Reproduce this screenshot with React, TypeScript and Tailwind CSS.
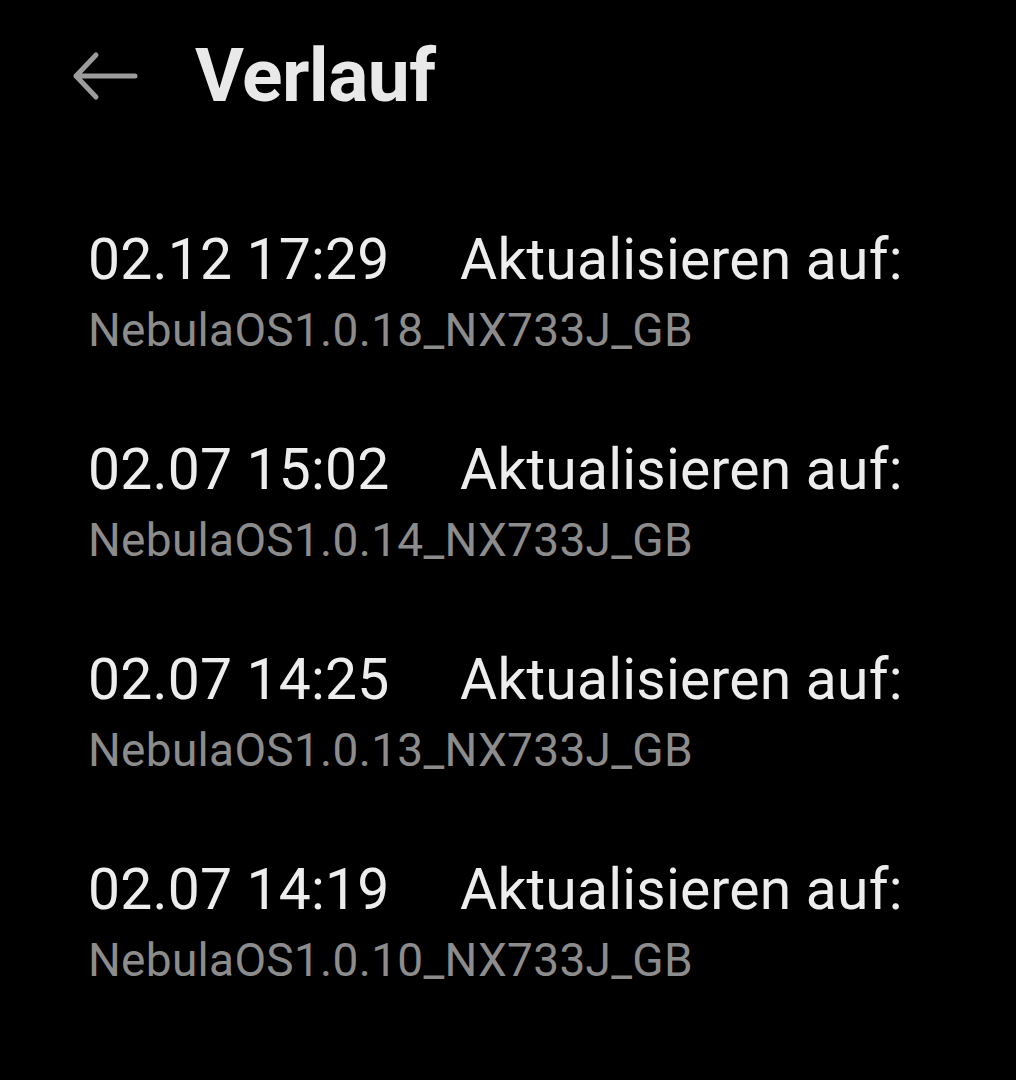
import React from "react";

const entries = [
  { time: "02.12 17:29", version: "NebulaOS1.0.18_NX733J_GB" },
  { time: "02.07 15:02", version: "NebulaOS1.0.14_NX733J_GB" },
  { time: "02.07 14:25", version: "NebulaOS1.0.13_NX733J_GB" },
  { time: "02.07 14:19", version: "NebulaOS1.0.10_NX733J_GB" },
];

function BackArrow() {
  return (
    <svg width="68" height="52" viewBox="0 0 68 52" fill="none" className="shrink-0">
      <path
        d="M65 26H6M26 5L6 26L26 47"
        stroke="#9c9c9c"
        strokeWidth="5"
        strokeLinecap="round"
        strokeLinejoin="round"
      />
    </svg>
  );
}

export default function App() {
  return (
    <div className="w-full min-h-[1080px] bg-black font-['Roboto','Liberation_Sans',sans-serif]">
      <div className="flex items-center gap-[57px] pl-[70px] pt-[38px]">
        <BackArrow />
        <h1 className="text-[75px] leading-none font-bold text-[#e9e9e9] tracking-[-0.5px]">Verlauf</h1>
      </div>

      <div className="flex flex-col gap-[89px] pl-[88px] mt-[119px]">
        {entries.map((e) => (
          <div key={e.version} className="flex flex-col">
            <div className="flex text-[57px] leading-[56px] tracking-[0.2px] text-[#ededed]">
              <span className="w-[372px] shrink-0">{e.time}</span>
              <span>Aktualisieren auf:</span>
            </div>
            <p className="mt-[19px] text-[46px] leading-[46px] tracking-[0.3px] text-[#8c8c8c]">{e.version}</p>
          </div>
        ))}
      </div>
    </div>
  );
}
